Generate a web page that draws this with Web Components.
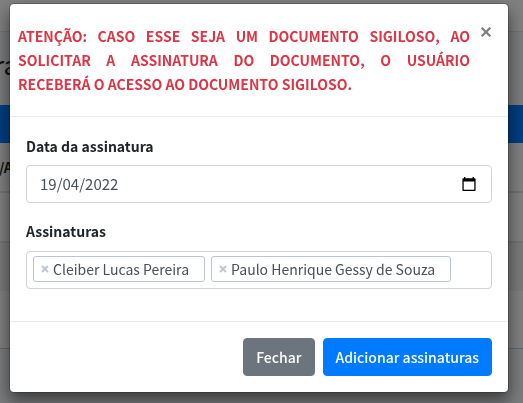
<!DOCTYPE html>
<html lang="pt-BR">
<head>
<meta charset="utf-8">
<title>Adicionar assinaturas</title>
<style>
  html, body { margin: 0; height: 100%; }
  body {
    font: 400 14px/24px "Noto Sans CJK SC", "Noto Sans", sans-serif;
    color: #212529;
    background: #f4f6f9;
    overflow: hidden;
  }
</style>
</head>
<body>
<page-backdrop></page-backdrop>
<signature-modal>
  <warning-header slot="header">ATENÇÃO: CASO ESSE SEJA UM DOCUMENTO SIGILOSO, AO SOLICITAR A ASSINATURA DO DOCUMENTO, O USUÁRIO RECEBERÁ O ACESSO AO DOCUMENTO SIGILOSO.</warning-header>
  <date-field label="Data da assinatura" value="19/04/2022"></date-field>
  <tag-field label="Assinaturas">
    <tag-chip>Cleiber Lucas Pereira</tag-chip>
    <tag-chip>Paulo Henrique Gessy de Souza</tag-chip>
  </tag-field>
  <action-button slot="footer" variant="secondary">Fechar</action-button>
  <action-button slot="footer" variant="primary">Adicionar assinaturas</action-button>
</signature-modal>
<script>
  const define = (name, html, setup) => {
    const template = document.createElement('template');
    template.innerHTML = html;
    customElements.define(name, class extends HTMLElement {
      constructor() {
        super();
        this.attachShadow({ mode: 'open' }).append(template.content.cloneNode(true));
      }
      connectedCallback() {
        if (setup) setup(this, this.shadowRoot);
      }
    });
  };

  define('page-backdrop', `
    <style>
      :host { display: block; }
      .nav { height: 31px; background: #fff; border-bottom: 1px solid #dee2e6; }
      h1 { margin: 0; padding: 12px 0 21px; font-size: 26px; font-weight: 400; line-height: 40px; text-indent: -6px; }
      .bar { height: 38px; background: #007bff; }
      .row { height: 48px; background: #fff; border-bottom: 2px solid #dee2e6; font-weight: 700; line-height: 48px; text-indent: -1px; }
      .row.odd { background: #f2f2f2; border-bottom: 0; }
      .row.last { height: 57px; border-bottom: 1px solid #c8cacd; }
    </style>
    <div class="nav"></div>
    <h1>ra</h1>
    <div class="bar"></div>
    <div class="row">/A</div>
    <div class="row"></div>
    <div class="row odd"></div>
    <div class="row last"></div>`);

  define('signature-modal', `
    <style>
      :host { position: fixed; inset: 0; display: block; padding: 3px 14px 10px 9px; background: rgba(0,0,0,.5); }
      section { background: #fff; background-clip: padding-box; border: 1px solid rgba(0,0,0,.2); border-radius: 5px; box-shadow: 0 8px 16px rgba(0,0,0,.5); }
      header { border-bottom: 1px solid #e9ecef; }
      .body { display: grid; gap: 16px; padding: 17px 16px 32px; }
      footer { display: flex; justify-content: flex-end; gap: 8px; padding: 16px; border-top: 1px solid #e9ecef; }
    </style>
    <section role="dialog" aria-modal="true">
      <header><slot name="header"></slot></header>
      <div class="body"><slot></slot></div>
      <footer><slot name="footer"></slot></footer>
    </section>`);

  define('warning-header', `
    <style>
      :host { display: flex; align-items: flex-start; padding: 20px 16px 20px 8px; }
      p { flex: 1; margin: 0; color: #dc3545; font-weight: 700; text-align: justify; }
      button { display: flex; margin: 0 0 0 10px; padding: 2px 0; border: 0; background: none; color: #7f7f7f; }
      svg { width: 12px; height: 12px; }
    </style>
    <p><slot></slot></p>
    <button type="button" aria-label="Close"><svg viewBox="0 0 12 12"><path d="M1.7 1.7l8.6 8.6M10.3 1.7l-8.6 8.6" stroke="currentColor" stroke-width="2.3"/></svg></button>`);

  define('date-field', `
    <style>
      :host { display: grid; gap: 7px; }
      label { font-weight: 700; }
      .box { display: flex; align-items: center; box-sizing: border-box; height: 38px; padding: 0 15px 0 13px; border: 1px solid #ced4da; border-radius: 4px; }
      input { flex: 1; min-width: 0; padding: 0; border: 0; outline: 0; font: inherit; font-size: 15px; color: #495057; background: none; }
      button { display: flex; padding: 0; border: 0; background: none; color: #000; }
      svg { width: 14px; height: 14px; }
    </style>
    <label for="date"></label>
    <div class="box">
      <input id="date" type="text" inputmode="numeric">
      <button type="button" aria-label="Abrir calendário"><svg viewBox="0 0 14 14"><path fill="currentColor" fill-rule="evenodd" d="M2 0h1.4v1.2h7.2V0H12v1.2h.6c.6 0 1 .4 1 1V13c0 .6-.4 1-1 1H1.4c-.6 0-1-.4-1-1V2.2c0-.6.4-1 1-1H2zM1.7 4.6v8.1h10.6V4.6z"/></svg></button>
    </div>`, (host, root) => {
      root.querySelector('label').textContent = host.getAttribute('label');
      root.querySelector('input').value = host.getAttribute('value');
    });

  define('tag-field', `
    <style>
      :host { display: grid; gap: 8px; }
      .label { font-weight: 700; }
      .box { display: flex; flex-wrap: wrap; align-items: center; gap: 6px; box-sizing: border-box; min-height: 38px; padding: 4px 6px 6px; border: 1px solid #ced4da; border-radius: 4px; }
    </style>
    <span class="label" id="label"></span>
    <div class="box" role="group" aria-labelledby="label"><slot></slot></div>`, (host, root) => {
      root.querySelector('.label').textContent = host.getAttribute('label');
    });

  define('tag-chip', `
    <style>
      :host { display: flex; align-items: center; gap: 4px; padding: 0 15px 0 7px; border: 1px solid #bdc6d0; border-radius: 3px; color: #495057; }
      button { display: flex; padding: 0; border: 0; background: none; color: #bdc6d0; }
      svg { width: 8px; height: 8px; }
    </style>
    <button type="button" aria-label="Remover"><svg viewBox="0 0 8 8"><path d="M1 1l6 6M7 1L1 7" stroke="currentColor" stroke-width="1.9"/></svg></button>
    <span><slot></slot></span>`);

  define('action-button', `
    <style>
      :host { display: block; }
      button { padding: 6px 12px; border: 1px solid #6c757d; border-radius: 4px; background: #6c757d; color: #fff; font: inherit; font-weight: 500; }
      :host([variant="primary"]) button { background: #007bff; border-color: #007bff; }
    </style>
    <button type="button"><slot></slot></button>`);
</script>
</body>
</html>
